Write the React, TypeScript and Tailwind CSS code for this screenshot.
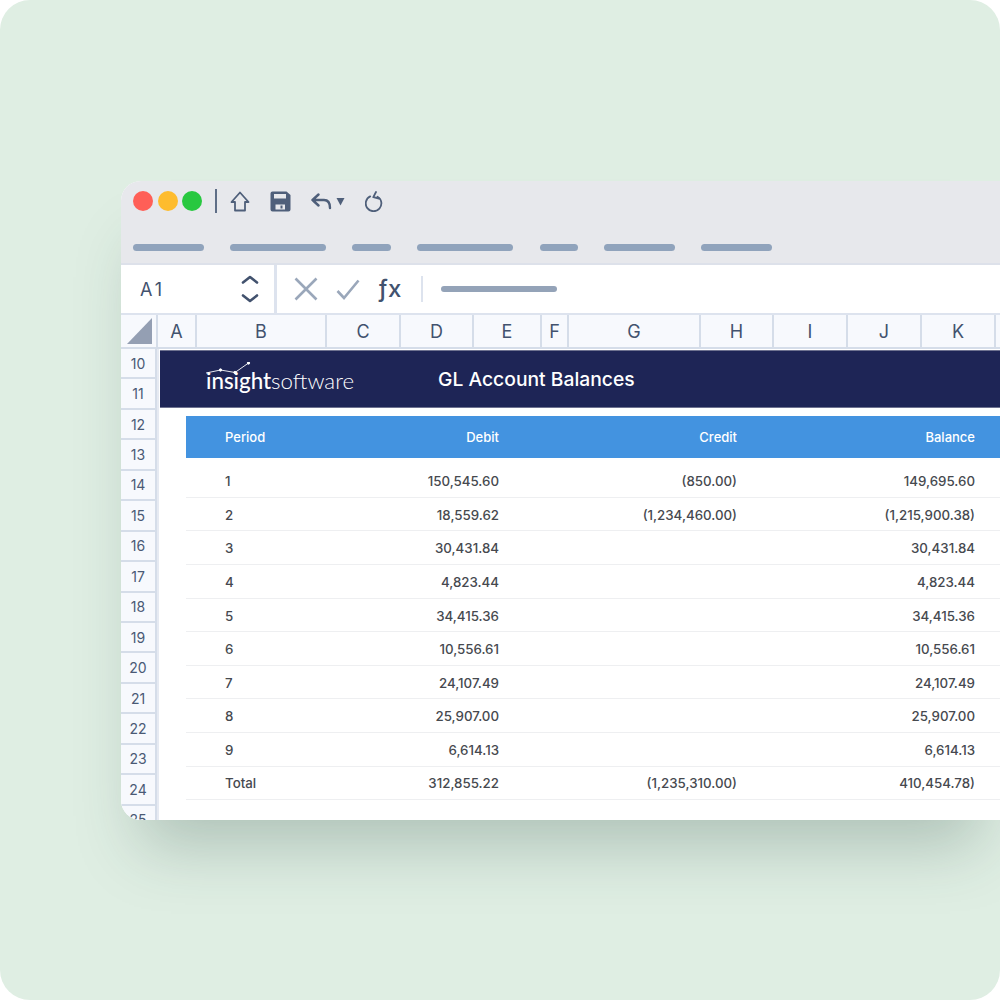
const cols: [string, string][] = [
  ["A", "w-[39px]"], ["B", "w-[130px]"], ["C", "w-[74px]"], ["D", "w-[73px]"], ["E", "w-[68px]"], ["F", "w-[27px]"],
  ["G", "w-[132px]"], ["H", "w-[73px]"], ["I", "w-[74px]"], ["J", "w-[74px]"], ["K", "w-[74px]"], ["", "w-[74px]"],
];
const rowsNums = [10, 11, 12, 13, 14, 15, 16, 17, 18, 19, 20, 21, 22, 23, 24, 25];
const data = [
  ["1", "150,545.60", "(850.00)", "149,695.60"],
  ["2", "18,559.62", "(1,234,460.00)", "(1,215,900.38)"],
  ["3", "30,431.84", "", "30,431.84"],
  ["4", "4,823.44", "", "4,823.44"],
  ["5", "34,415.36", "", "34,415.36"],
  ["6", "10,556.61", "", "10,556.61"],
  ["7", "24,107.49", "", "24,107.49"],
  ["8", "25,907.00", "", "25,907.00"],
  ["9", "6,614.13", "", "6,614.13"],
  ["Total", "312,855.22", "(1,235,310.00)", "410,454.78)"],
];
const menus = ["w-[70.500px]", "w-[96px]", "w-[39px]", "w-[96px]", "w-[38px]", "w-[71px]", "w-[71px]"];

function Icons() {
  return (
    <div className="flex items-center">
      <div className="w-[2px] h-[24px] bg-[#5f6e87] ml-[8px]" />
      <svg className="ml-[13px]" width="21" height="21" viewBox="0 0 21 21" fill="none" stroke="#4f5f7a" strokeWidth="1.8" strokeLinejoin="round">
        <path d="M10 1.5 1.500 11h3.500v8.500h10V11h3.500z" />
      </svg>
      <svg className="ml-[19px]" width="21" height="21" viewBox="0 0 21 21">
        <path fill="#4f5f7a" fillRule="evenodd" d="M2.5.5h14L20.500 4v14.500a2 2 0 0 1-2 2h-16a2 2 0 0 1-2-2v-16a2 2 0 0 1 2-2zM4 3v4.500h12V3zM5.500 13.500v5h9.500v-5zM10.500 14.500h2v3h-2z" />
      </svg>
      <svg className="ml-[20px]" width="21" height="17" viewBox="0 0 21 17" fill="none" stroke="#4f5f7a" strokeWidth="2.400" strokeLinecap="round" strokeLinejoin="round">
        <path d="M7.500 1.500 1.500 7l6 5.500M1.500 7H13c3.800 0 6 2.600 6 8" />
      </svg>
      <svg className="ml-[4px]" width="9" height="9" viewBox="0 0 9 9"><path fill="#4f5f7a" d="M.5 1h8L4.500 8.500z" /></svg>
      <svg className="ml-[20px]" width="18" height="21" viewBox="0 0 18 21" fill="none" stroke="#4f5f7a" strokeWidth="1.800" strokeLinecap="round" strokeLinejoin="round">
        <path d="M5.200 5.400a7.800 7.800 0 1 0 7.300 .3" />
        <path d="M11 1 8.300 6.200l5.700 1.300" />
      </svg>
    </div>
  );
}

function Logo() {
  return (
    <div className="relative w-[148px] h-[38px] ml-[46px] shrink-0">
      <svg className="absolute left-0 top-[2px]" width="148" height="14" viewBox="0 0 148 14" fill="none" stroke="#fff" strokeWidth="0.9">
        <path d="M0 11 14.500 8 29 10.500 42.500 1" />
        <circle cx="14.500" cy="8" r="1.200" fill="#fff" />
        <circle cx="29" cy="10.500" r="1.200" fill="#fff" />
        <circle cx="42.500" cy="1" r="1.200" fill="#fff" />
      </svg>
      <div className="absolute left-0 top-[8px] text-[22.300px] leading-[26px] text-white whitespace-nowrap font-['Lato',sans-serif]">
        <span className="font-medium">insight</span>
        <span className="font-light">software</span>
      </div>
    </div>
  );
}

export default function App() {
  return (
    <div className="w-[1000px] h-[1000px] bg-white font-['Inter',sans-serif]">
      <div className="w-full h-full rounded-[30px] bg-[#dfeee3] overflow-hidden pt-[181px] pl-[121px]">
        <div className="w-[879px] h-[639px] rounded-l-[20px] overflow-hidden bg-white flex flex-col shadow-[0_46px_60px_-20px_rgba(40,70,60,0.26)]">
          <div className="h-[84px] shrink-0 bg-[#e7e8ec] border-b-2 border-[#dde1ea] pl-[12px] pt-[10px]">
            <div className="flex items-center h-[20px] gap-[4.500px]">
              <div className="w-[20px] h-[20px] rounded-full bg-[#ff5f57]" />
              <div className="w-[20px] h-[20px] rounded-full bg-[#febc2e]" />
              <div className="w-[20px] h-[20px] rounded-full bg-[#28c840]" />
              <Icons />
            </div>
            <div className="flex gap-[26.250px] mt-[33px]">
              {menus.map((m, i) => (
                <div key={i} className={`${m} h-[7px] rounded-full bg-[#90a3bc]`} />
              ))}
            </div>
          </div>
          <div className="h-[50px] shrink-0 flex items-center border-b-2 border-[#dde3ee]">
            <div className="w-[156px] h-full flex items-center justify-between pl-[19px] pr-[15px] border-r-[3px] border-[#dde3ee] shrink-0">
              <span className="text-[18px] tracking-[3px] text-[#42526e]">A1</span>
              <svg width="18" height="28" viewBox="0 0 18 28" fill="none" stroke="#42526e" strokeWidth="2.600" strokeLinecap="round" strokeLinejoin="round">
                <path d="M2 7.500 9 2l7 5.500M2 20.500 9 26l7-5.500" />
              </svg>
            </div>
            <svg className="ml-[17px] shrink-0" width="24" height="24" viewBox="0 0 24 24" fill="none" stroke="#9aa7ba" strokeWidth="2.600">
              <path d="M1.500 1.500l21 21M22.500 1.500l-21 21" />
            </svg>
            <svg className="ml-[18px] shrink-0" width="24" height="21" viewBox="0 0 24 21" fill="none" stroke="#9aa7ba" strokeWidth="2.600">
              <path d="M1.500 12 8 19 22.500 1.500" />
            </svg>
            <span className="ml-[18px] w-[25px] shrink-0 text-[24px] leading-none font-medium text-[#42526e] whitespace-nowrap">ƒx</span>
            <div className="w-[2px] h-[26px] bg-[#dde3ee] ml-[18px] shrink-0" />
            <div className="w-[116px] h-[6px] rounded-full bg-[#94a3b8] ml-[18px]" />
          </div>
          <div className="h-[34px] shrink-0 flex border-b-2 border-[#d5dde9] bg-[#f7f9fd]">
            <div className="w-[37px] shrink-0 border-r-2 border-[#d5dde9] flex items-end justify-end pr-[4px] pb-[3px]">
              <svg width="25" height="26" viewBox="0 0 25 26"><path fill="#949fb3" d="M25 0v26H0z" /></svg>
            </div>
            {cols.map(([c, w], i) => (
              <div key={i} className={`${w} shrink-0 border-r-2 border-[#d5dde9] flex items-center justify-center text-[18px] text-[#42526e]`}>
                {c}
              </div>
            ))}
          </div>
          <div className="flex-1 min-h-0 flex">
            <div className="w-[38px] shrink-0 border-r-2 border-[#e6eaf2] bg-[#f7f9fd] overflow-hidden">
              {rowsNums.map((n) => (
                <div key={n} className="h-[30.450px] w-full border-b-2 border-[#d5dde9] border-r-2 border-r-[#d5dde9] flex items-center justify-center text-[14px] text-[#4a5a75]">
                  {n}
                </div>
              ))}
            </div>
            <div className="flex-1 min-w-0 overflow-hidden">
              <div className="h-[58px] mt-[1px] ml-[1px] bg-[#1e2556] border-y border-[#6e7290] flex items-center">
                <Logo />
                <div className="ml-[84px] pt-[1px] text-[19.300px] font-medium text-white">GL Account Balances</div>
              </div>
              <div className="ml-[27px] w-[900px] mt-[8px]">
                <div className="h-[42px] pt-[2px] bg-[#4393e0] grid grid-cols-[38px_275px_238px_238px] items-center text-[13px] font-medium text-white">
                  <div className="pl-[39px] whitespace-nowrap">Period</div>
                  <div className="text-right">Debit</div>
                  <div className="text-right">Credit</div>
                  <div className="text-right">Balance</div>
                </div>
                <div className="mt-[6.300px]">
                  {data.map((r, i) => (
                    <div key={i} className="h-[33.600px] pt-[3px] border-b border-[#eeeff1] grid grid-cols-[38px_275px_238px_238px] items-center text-[13.300px] font-[450] text-[#46494f]">
                      <div className="pl-[39px] whitespace-nowrap">{r[0]}</div>
                      <div className="text-right">{r[1]}</div>
                      <div className="text-right">{r[2]}</div>
                      <div className="text-right">{r[3]}</div>
                    </div>
                  ))}
                </div>
              </div>
            </div>
          </div>
        </div>
      </div>
    </div>
  );
}
